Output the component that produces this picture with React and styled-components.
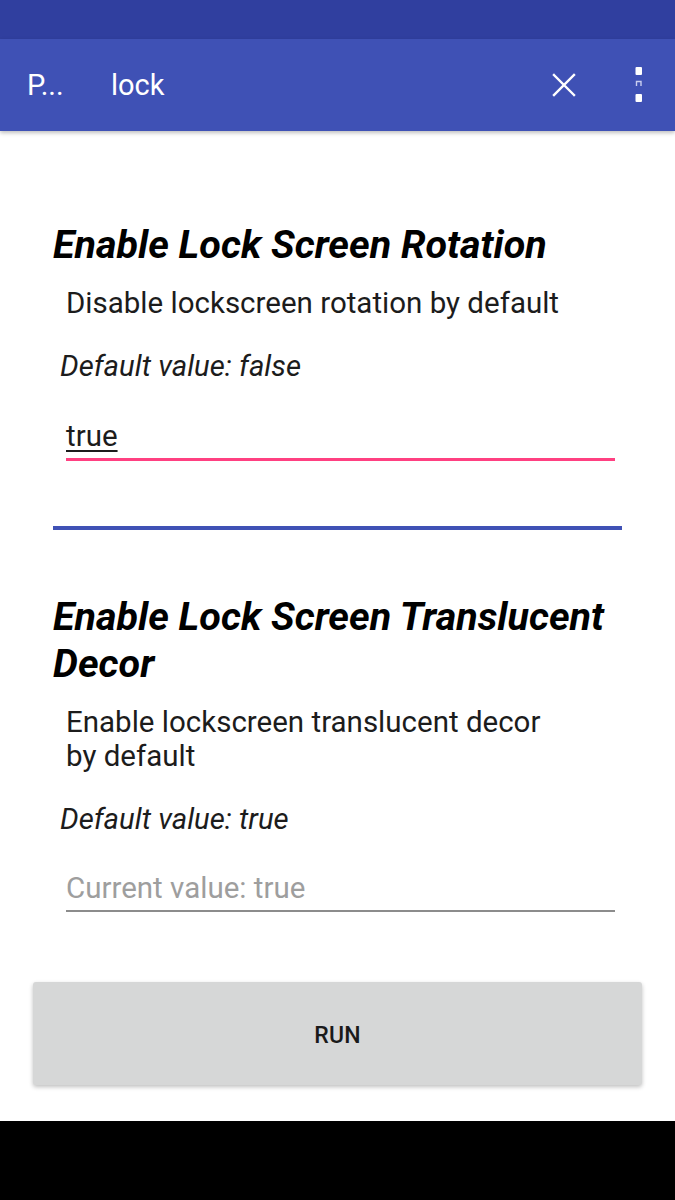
import React from 'react';
import styled, { createGlobalStyle } from 'styled-components';

const GlobalStyle = createGlobalStyle`
  html, body {
    margin: 0;
    padding: 0;
    background: #ffffff;
  }
  body {
    font-family: Roboto, "Noto Sans", "Liberation Sans", sans-serif;
  }
`;

const Screen = styled.div`
  width: 675px;
  height: 1200px;
  display: flex;
  flex-direction: column;
  background: #ffffff;
  overflow: hidden;
`;

const StatusBar = styled.div`
  height: 39px;
  flex-shrink: 0;
  background: #303f9f;
`;

const Toolbar = styled.div`
  height: 92px;
  flex-shrink: 0;
  display: flex;
  align-items: center;
  padding-left: 27px;
  background: #3f51b5;
  box-shadow: 0 2px 4px rgba(0, 0, 0, 0.25);
  position: relative;
  z-index: 1;
  color: #ffffff;
`;

const ToolbarTitle = styled.div`
  font-size: 29px;
  width: 84px;
  line-height: 36px;
`;

const SearchText = styled.div`
  flex: 1;
  font-size: 29px;
  line-height: 36px;
`;

const IconButton = styled.button`
  width: ${(p) => p.$w}px;
  height: 92px;
  border: none;
  background: none;
  padding: 0;
  display: flex;
  align-items: center;
  justify-content: center;
  color: #ffffff;
`;

const Content = styled.div`
  flex: 1;
  padding: 90px 53px 0 53px;
  display: flex;
  flex-direction: column;
`;

const Title = styled.h2`
  margin: ${(p) => p.$top || 0}px 0 0 0;
  font-size: 39.5px;
  line-height: 47px;
  font-weight: 700;
  font-style: italic;
  color: #000000;
`;

const Description = styled.p`
  margin: ${(p) => p.$top}px 0 0 13px;
  max-width: 502px;
  font-size: 29.5px;
  line-height: 34px;
  color: #1c1c1c;
`;

const DefaultValue = styled.p`
  margin: ${(p) => p.$top}px 0 0 7px;
  font-size: 29.3px;
  line-height: 34px;
  font-style: italic;
  color: #1c1c1c;
`;

const Field = styled.div`
  margin: ${(p) => p.$top}px 7px 0 13px;
  padding-bottom: 5px;
  border-bottom: ${(p) => (p.$focused ? '3px solid #ff4081' : '2px solid #8c8c8c')};
  font-size: 29.5px;
  line-height: 34px;
  color: ${(p) => (p.$hint ? '#9e9e9e' : '#1c1c1c')};
`;

const Underlined = styled.span`
  text-decoration: underline;
  text-underline-offset: 4px;
  text-decoration-thickness: 2px;
`;

const Divider = styled.div`
  margin-top: 65px;
  height: 4px;
  background: #3f51b5;
`;

const ButtonArea = styled.div`
  padding: 70px 33px 0 33px;
  margin: 0 -53px;
`;

const RunButton = styled.button`
  width: 100%;
  height: 103px;
  border: none;
  border-radius: 3px;
  background: #d6d7d7;
  box-shadow: 0 2px 4px rgba(0, 0, 0, 0.25);
  font-family: Roboto, "Liberation Sans", sans-serif;
  font-size: 23px;
  font-weight: 500;
  color: #1a1a1a;
  letter-spacing: 0.3px;
  padding: 4px 0 0 0;
`;

const NavBar = styled.div`
  height: 79px;
  flex-shrink: 0;
  background: #000000;
`;

const CloseIcon = () => (
  <svg width="26" height="26" viewBox="0 0 26 26">
    <path d="M3 3 L23 23 M23 3 L3 23" stroke="#ffffff" strokeWidth="2.4" strokeLinecap="square" />
  </svg>
);

const MoreIcon = () => (
  <svg width="10" height="38" viewBox="0 0 10 38">
    <rect x="1.5" y="1" width="6.5" height="8" rx="1" fill="#ffffff" />
    <path d="M2.5 20 V15.5 H7 V20" stroke="#c9cef0" strokeWidth="1.4" fill="none" />
    <rect x="1.5" y="28" width="6.5" height="8" rx="1" fill="#ffffff" />
  </svg>
);

export default function App() {
  return (
    <Screen>
      <GlobalStyle />
      <StatusBar />
      <Toolbar>
        <ToolbarTitle>P...</ToolbarTitle>
        <SearchText>lock</SearchText>
        <IconButton $w={76}>
          <CloseIcon />
        </IconButton>
        <IconButton $w={73}>
          <MoreIcon />
        </IconButton>
      </Toolbar>
      <Content>
        <Title>Enable Lock Screen Rotation</Title>
        <Description $top={18}>Disable lockscreen rotation by default</Description>
        <DefaultValue $top={29}>Default value: false</DefaultValue>
        <Field $top={36} $focused>
          <Underlined>true</Underlined>
        </Field>
        <Divider />
        <Title $top={63}>Enable Lock Screen Translucent Decor</Title>
        <Description $top={18}>Enable lockscreen translucent decor by default</Description>
        <DefaultValue $top={29}>Default value: true</DefaultValue>
        <Field $top={35} $hint>
          Current value: true
        </Field>
        <ButtonArea>
          <RunButton>RUN</RunButton>
        </ButtonArea>
      </Content>
      <NavBar />
    </Screen>
  );
}
